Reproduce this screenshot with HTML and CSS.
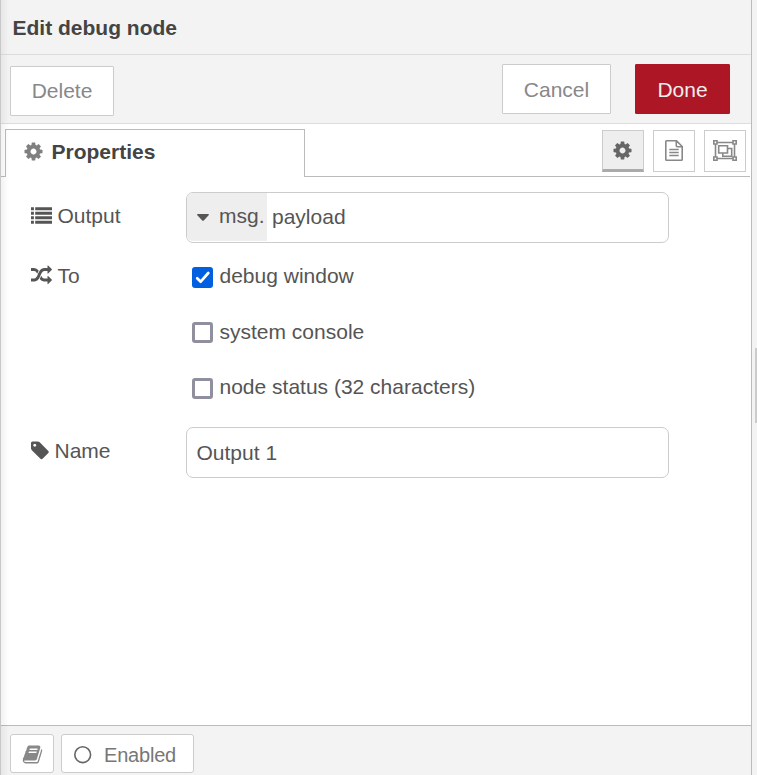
FILE: index.html
```html
<!DOCTYPE html>
<html lang="en">
<head>
<meta charset="utf-8">
<title>Edit debug node</title>
<link rel="stylesheet" href="styles.css">
</head>
<body>
<svg class="defs" width="0" height="0">
  <symbol id="cog" viewBox="0 0 1792 1792"><path d="M1152 896q0-106-75-181t-181-75-181 75-75 181 75 181 181 75 181-75 75-181zm512-109v222q0 12-8 23t-20 13l-185 28q-19 54-39 91 35 50 107 138 10 12 10 25t-9 23q-27 37-99 108t-94 71q-12 0-26-9l-138-108q-44 23-91 38-16 136-29 186-7 28-36 28h-222q-14 0-24.5-8.5t-11.5-21.5l-28-184q-49-16-90-37l-141 107q-10 9-25 9-14 0-25-11-126-114-165-168-7-10-7-23 0-12 8-23 15-21 51-66.5t54-70.5q-27-50-41-99l-183-27q-13-2-21-12.5t-8-23.5v-222q0-12 8-23t19-13l186-28q14-46 39-92-40-57-107-138-10-12-10-24 0-10 9-23 26-36 98.5-107.5t94.5-71.5q13 0 26 10l138 107q44-23 91-38 16-136 29-186 7-28 36-28h222q14 0 24.5 8.5t11.5 21.5l28 184q49 16 90 37l142-107q9-9 24-9 13 0 25 10 129 119 165 170 7 8 7 22 0 12-8 23-15 21-51 66.5t-54 70.5q26 50 41 98l183 28q13 2 21 12.5t8 23.5z"/></symbol>
</svg>
<div class="app">
  <main class="tray">
    <header class="title">Edit debug node</header>
    <div class="toolbar">
      <button class="btn delete">Delete</button>
      <button class="btn cancel">Cancel</button>
      <button class="btn done">Done</button>
    </div>
    <nav class="tabs">
      <div class="tab"><svg class="icon" width="21" height="21"><use href="#cog"/></svg><span>Properties</span></div>
      <div class="tab-fill">
        <button class="tab-icon selected"><svg width="21" height="21"><use href="#cog"/></svg></button>
        <button class="tab-icon"><svg width="18" height="21" viewBox="0 0 18 21" fill="none" stroke="currentColor" stroke-width="1.6"><path d="M.8 1.6q0-.8.8-.8h9.9l5.7 5.7v12.9q0 .8-.8.8H1.6q-.8 0-.8-.8zM11.3.8v5q0 .9.9.9h5M4.3 9.5h9.4M4.3 12.5h9.4M4.3 15.5h9.4"/></svg></button>
        <button class="tab-icon"><svg width="24" height="21" viewBox="0 0 24 21" fill="none" stroke="currentColor" stroke-width="1.6"><path d="M4 2.5h16M4 18.5h16M2.5 4v13M21.5 4v13M.8.8h3.2v3.2H.8zM20 .8h3.2v3.2H20zM.8 17h3.2v3.2H.8zM20 17h3.2v3.2H20zM5.7 5.7h8.8v7.3H5.7zM14.5 8.5h4.2v7.7H9.8V13"/></svg></button>
      </div>
    </nav>
    <section class="form">
      <div class="row output">
        <label class="label"><svg width="21" height="21" viewBox="0 0 21 21" fill="currentColor"><path d="M0 2.3h2.9v3H0zM0 6.8h2.9v3H0zM0 11.3h2.9v3H0zM0 15.8h2.9v3H0zM4.2 2.3H21v3H4.2zM4.2 6.8H21v3H4.2zM4.2 11.3H21v3H4.2zM4.2 15.8H21v3H4.2z"/></svg><span>Output</span></label>
        <div class="field"><span class="type"><svg width="12" height="7" viewBox="0 0 12 7" fill="currentColor"><path d="M.7 0h10.6q1 .4.3 1.3L6.8 6.4q-.8.8-1.6 0L.4 1.3Q-.3.4.7 0z"/></svg><span>msg.</span></span><span class="value">payload</span></div>
      </div>
      <div class="row to">
        <label class="label"><svg width="21" height="21" viewBox="0 0 1792 1792" fill="currentColor"><path d="M666 481q-60 92-137 273-22-45-37-72.5t-40.5-63.5-51-56.5-63-35-81.5-14.5h-224q-14 0-23-9t-9-23v-192q0-14 9-23t23-9h224q250 0 410 225zm1126 799q0 14-9 23l-320 320q-9 9-23 9-13 0-22.5-9.5t-9.5-22.5v-192q-32 0-85 .5t-81 1-73-1-71-5-64-10.5-63-18.5-58-28.5-59-40-55-53.5-56-69.5q59-93 136-273 22 45 37 72.5t40.5 63.5 51 56.5 63 35 81.5 14.5h256v-192q0-14 9-23t23-9q12 0 24 10l319 319q9 9 9 23zm0-896q0 14-9 23l-320 320q-9 9-23 9-13 0-22.5-9.5t-9.5-22.5v-192h-256q-48 0-87 15t-69 45-51 61.5-45 77.5q-32 62-78 171-29 66-49.5 111t-54 105-64 100-74 83-90 68.5-106.5 42-128 16.5h-224q-14 0-23-9t-9-23v-192q0-14 9-23t23-9h224q48 0 87-15t69-45 51-61.5 45-77.5q32-62 78-171 29-66 49.5-111t54-105 64-100 74-83 90-68.5 106.5-42 128-16.5h256v-192q0-14 9-23t23-9q12 0 24 10l319 319q9 9 9 23z"/></svg><span>To</span></label>
        <div class="checks">
          <div class="check"><i class="box on"><svg width="21" height="21" viewBox="0 0 21 21" fill="none" stroke="#fff" stroke-width="2.7" stroke-linecap="round" stroke-linejoin="round"><path d="M5.2 11.2l3.5 3.5 7.6-8.7"/></svg></i><span>debug window</span></div>
          <div class="check"><i class="box"></i><span>system console</span></div>
          <div class="check"><i class="box"></i><span>node status (32 characters)</span></div>
        </div>
      </div>
      <div class="row name">
        <label class="label"><svg width="18" height="21" viewBox="128 0 1536 1792" fill="currentColor"><path d="M576 448q0-53-37.5-90.5t-90.5-37.5-90.5 37.5-37.5 90.5 37.5 90.5 90.5 37.5 90.5-37.5 37.5-90.5zm1067 576q0 53-37 90l-491 492q-39 37-91 37-53 0-90-37l-715-716q-38-37-64.5-101t-26.5-117v-416q0-52 38-90t90-38h416q53 0 117 26.5t102 64.5l715 714q37 39 37 91z"/></svg><span>Name</span></label>
        <div class="field"><span class="text">Output 1</span></div>
      </div>
    </section>
    <footer class="footer">
      <button class="foot-btn book"><svg width="21" height="21" viewBox="0 0 1792 1792" fill="currentColor"><path d="M1703 478q40 57 18 129l-275 906q-19 64-76.5 107.5t-122.5 43.5h-923q-77 0-148.5-53.5t-99.5-131.5q-24-67-2-127 0-4 3-27t4-37q1-8-3-21.5t-3-19.5q2-11 8-21t16.5-23.5 16.5-23.5q23-38 45-91.5t30-91.5q3-10 .5-30t-.5-28q3-11 17-28t17-23q21-36 42-92t25-90q1-9-2.5-32t.5-28q4-13 22-30.5t22-22.5q19-26 42.5-84.5t27.5-96.5q1-8-3-25.5t-2-26.5q2-8 9-18t18-23 17-21q8-12 16.5-30.5t15-35 16-36 19.5-32 26.5-23.5 36-11.5 47.5 5.5l-1 3q38-9 51-9h761q74 0 114 56t18 130l-274 906q-36 119-71.5 153.5t-128.5 34.5h-869q-27 0-38 15-11 16-1 43 24 70 144 70h923q29 0 56-15.5t35-41.5l300-987q7-22 5-57 38 15 59 43zm-1064 2q-4 13 2 22.5t20 9.5h608q13 0 25.5-9.5t16.5-22.5l21-64q4-13-2-22.5t-20-9.5h-608q-13 0-25.5 9.5t-16.5 22.5zm-83 256q-4 13 2 22.5t20 9.5h608q13 0 25.5-9.5t16.5-22.5l21-64q4-13-2-22.5t-20-9.5h-608q-13 0-25.5 9.5t-16.5 22.5z"/></svg></button>
      <button class="foot-btn enabled"><svg width="18" height="18" viewBox="0 0 18 18" fill="none" stroke="currentColor" stroke-width="1.6"><circle cx="8.7" cy="8.7" r="7.9"/></svg><span>Enabled</span></button>
    </footer>
  </main>
  <aside class="separator"><div class="grip"></div></aside>
</div>
</body>
</html>
```

FILE: styles.css
```css
* { box-sizing: border-box; }
body {
  margin: 0;
  font: 21px/30px "Liberation Sans", Arial, sans-serif;
  color: #555;
  background: #f3f3f3;
}
.defs { display: block; }
svg { display: block; flex: none; fill: currentColor; }
svg[fill="none"] { fill: none; }
button { font: inherit; margin: 0; padding: 0; }
.app { display: flex; height: 775px; overflow: hidden; }
.tray {
  position: relative;
  display: flex;
  flex-direction: column;
  width: 752px;
  border-left: 1px solid #c8c8c8;
  border-right: 1px solid #bbb;
  background: #fff;
}
.tray::after {
  content: "";
  position: absolute;
  inset: 0 auto 0 0;
  width: 8px;
  background: linear-gradient(to right, rgba(0,0,0,.05), rgba(0,0,0,0));
  pointer-events: none;
}
.title {
  height: 55px;
  padding: 13px 12px 0 11.5px;
  border-bottom: 1px solid #ddd;
  background: #f3f3f3;
  font-weight: bold;
  color: #444;
}
.toolbar {
  display: flex;
  height: 69px;
  padding: 9px 21px 0 9px;
  border-bottom: 1px solid #ddd;
  background: #f3f3f3;
}
.btn {
  height: 50px;
  border: 1px solid #ccc;
  border-radius: 1px;
  background: #fff;
  color: #888;
}
.delete { width: 104px; margin: 2px auto 0 0; }
.cancel { width: 109px; margin-right: 24px; padding-top: 2px; }
.done { width: 95px; padding-top: 2px; border-color: #ad1625; background: #ad1625; color: #eee; }
.tabs { display: flex; height: 53px; padding-right: 1px; }
.tabs::before { content: ""; width: 4px; border-bottom: 1px solid #bbb; }
.tab {
  display: flex;
  width: 300px;
  margin-top: 5px;
  padding: 7px 0 0 16.5px;
  border: 1px solid #bbb;
  border-bottom: 0;
  font-weight: bold;
  color: #444;
}
.tab .icon { margin: 4px 8px 0 0; color: #808080; }
.tab-fill {
  flex: 1;
  display: flex;
  justify-content: flex-end;
  gap: 9px;
  padding: 6px 4px 0 0;
  border-bottom: 1px solid #bbb;
}
.tab-icon {
  display: flex;
  align-items: center;
  justify-content: center;
  width: 42px;
  height: 42px;
  padding-bottom: 1px;
  border: 1px solid #ccc;
  background: #fff;
  color: #888;
}
.tab-icon.selected {
  padding: 0 1px 0 0;
  border-bottom: 3px solid #aaa;
  background: #eee;
  color: #666;
}
.form { flex: 1; padding: 15px 0 0 29px; }
.row { display: flex; }
.label { display: flex; width: 156px; padding-top: 9px; }
.label svg { margin: 4px 5px 0 1px; }
.label span { margin-left: .5px; }
.output { height: 67px; }
.to { height: 168px; }
.to .label { padding-top: 2px; }
.field {
  display: flex;
  width: 483px;
  height: 51px;
  border: 1px solid #ccc;
  border-radius: 7px;
}
.type {
  display: flex;
  width: 80px;
  height: 48px;
  padding: 8px 0 0 10px;
  border-radius: 6px 0 0 6px;
  background: #eee;
}
.type svg { margin: 13px 10px 0 0; }
.value { padding: 9px 0 0 5px; }
.text { padding: 10px 0 0 9.5px; }
.checks { padding-left: 6px; }
.check { display: flex; height: 55.5px; padding-top: 2px; }
.box {
  width: 21px;
  height: 21px;
  margin: 5.5px 6.5px 0 0;
  border: 3px solid #8f8f9d;
  border-radius: 3px;
}
.box.on { margin-top: 6px; border: 0; background: #0060df; }
.check:nth-child(2) .box { margin-top: 5px; }
.check:nth-child(3) .box { margin-top: 6px; }
.footer {
  display: flex;
  gap: 7px;
  height: 50px;
  padding: 8px 9px 0;
  border-top: 1px solid #bbb;
  background: #f3f3f3;
}
.foot-btn {
  display: flex;
  align-items: center;
  height: 39px;
  border: 1px solid #ccc;
  border-radius: 3px;
  background: #fff;
  color: #777;
}
.book { width: 44px; padding: 2px 0 0 11px; color: #888; }
.enabled { width: 133px; padding: 2px 0 0 12px; gap: 12px; font-size: 20px; letter-spacing: -.2px; }
.enabled svg { color: #666; }
.separator { display: flex; align-items: center; justify-content: flex-end; width: 5px; }
.grip { width: 2px; height: 75px; margin-bottom: 5px; background: #ccc; }
```
